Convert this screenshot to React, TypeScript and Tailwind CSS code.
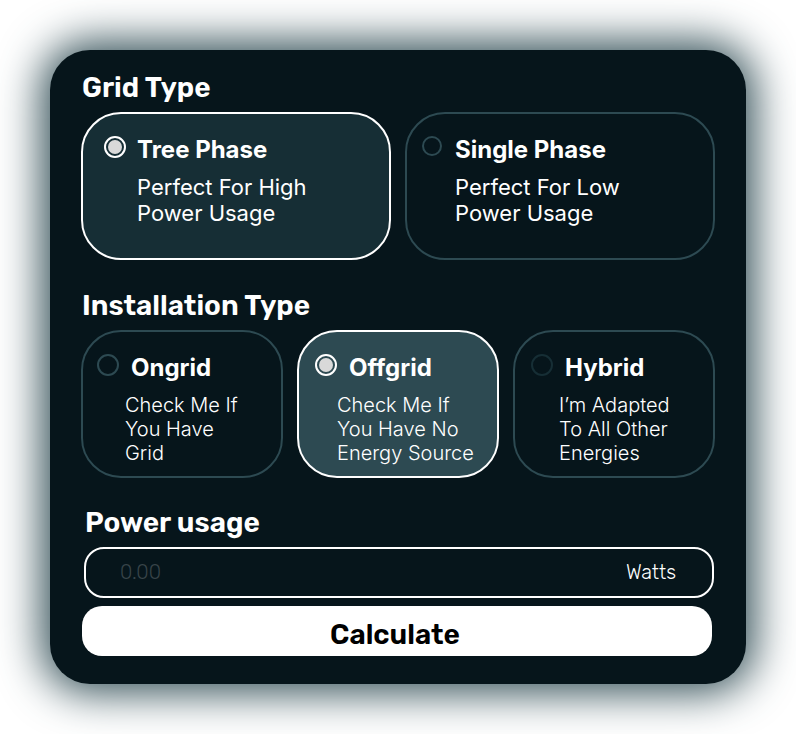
import { useState } from "react";

type Option = {
  id: string;
  title: string;
  lines: string[];
  card: string;
  radio: string;
  text: string;
};

const gridTypes: Option[] = [
  {
    id: "tree",
    title: "Tree Phase",
    lines: ["Perfect For High", "Power Usage"],
    card: "pl-[21px] has-checked:bg-[#162e35]",
    radio: "size-[22px] border-[#2d4a52]",
    text: "pl-[33px]",
  },
  {
    id: "single",
    title: "Single Phase",
    lines: ["Perfect For Low", "Power Usage"],
    card: "pl-[15px] has-checked:bg-[#162e35]",
    radio: "size-5 mr-[2px] border-[#2d4a52]",
    text: "pl-[33px]",
  },
];

const installTypes: Option[] = [
  {
    id: "ongrid",
    title: "Ongrid",
    lines: ["Check Me If", "You Have", "Grid"],
    card: "pl-[14px] has-checked:bg-[#2d4a52]",
    radio: "size-[22px] mr-px border-[#2d4a52]",
    text: "pl-7",
  },
  {
    id: "offgrid",
    title: "Offgrid",
    lines: ["Check Me If", "You Have No", "Energy Source"],
    card: "pl-4 has-checked:bg-[#2d4a52]",
    radio: "size-[22px] mr-px border-[#2d4a52]",
    text: "pl-[22px]",
  },
  {
    id: "hybrid",
    title: "Hybrid",
    lines: ["I’m Adapted", "To All Other", "Energies"],
    card: "pl-4 has-checked:bg-[#2d4a52]",
    radio: "size-[22px] mr-px border-[#162e35]",
    text: "pl-7",
  },
];

function OptionCard({
  option,
  name,
  checked,
  onSelect,
  textStyle,
}: {
  option: Option;
  name: string;
  checked: boolean;
  onSelect: () => void;
  textStyle: string;
}) {
  return (
    <label
      className={`block min-h-[148px] cursor-pointer rounded-[40px] border-2 border-[#2d4a52] pt-[22px] has-checked:border-white ${option.card}`}
    >
      <span className="flex items-start gap-[11px]">
        <input
          type="radio"
          name={name}
          value={option.id}
          checked={checked}
          onChange={onSelect}
          className={`shrink-0 appearance-none rounded-full border-2 p-[2px] checked:border-white checked:bg-[#d9d9d9] checked:bg-clip-content ${option.radio}`}
        />
        <span className="text-2xl/7 font-bold whitespace-nowrap">{option.title}</span>
      </span>
      <span className={`block whitespace-nowrap ${textStyle} ${option.text}`}>
        {option.lines.map((line) => (
          <span key={line} className="block">
            {line}
          </span>
        ))}
      </span>
    </label>
  );
}

const heading = "font-[Rubik,Roboto,sans-serif] text-[28px]/8 font-semibold";

export default function App() {
  const [grid, setGrid] = useState("tree");
  const [install, setInstall] = useState("offgrid");
  const [power, setPower] = useState("");

  return (
    <main className="bg-white p-[50px] font-[Inter,sans-serif] text-white">
      <form
        onSubmit={(event) => event.preventDefault()}
        className="flex flex-col gap-[29px] rounded-[40px] bg-[#06151b] px-[31px] pt-[22px] pb-7 shadow-[0_0_44px_8px_#2d4a52]"
      >
        <section>
          <h2 className={`mb-2 pl-px ${heading}`}>Grid Type</h2>
          <div className="grid grid-cols-2 gap-[14px]">
            {gridTypes.map((option) => (
              <OptionCard
                key={option.id}
                option={option}
                name="grid"
                checked={grid === option.id}
                onSelect={() => setGrid(option.id)}
                textStyle="mt-[10px] text-[22px]/[26px] font-normal"
              />
            ))}
          </div>
        </section>

        <section className="pt-px">
          <h2 className={`mb-2 pl-px ${heading}`}>Installation Type</h2>
          <div className="grid grid-cols-3 gap-[14px]">
            {installTypes.map((option) => (
              <OptionCard
                key={option.id}
                option={option}
                name="install"
                checked={install === option.id}
                onSelect={() => setInstall(option.id)}
                textStyle="mt-[11px] text-xl/6 font-light"
              />
            ))}
          </div>
        </section>

        <section>
          <h2 className={`mb-2 pl-1 ${heading}`}>
            <label htmlFor="power">Power usage</label>
          </h2>
          <div className="mr-px ml-[3px] flex h-[51px] items-center rounded-[20px] border-2 border-white pr-9 pb-[2px] pl-[34px] font-[Rubik,Roboto,sans-serif] text-xl font-light">
            <input
              id="power"
              type="text"
              inputMode="decimal"
              placeholder="0.00"
              value={power}
              onChange={(event) => setPower(event.target.value)}
              className="min-w-0 flex-1 bg-transparent outline-none placeholder:text-[#384449]"
            />
            <span>Watts</span>
          </div>
          <button
            type="submit"
            className={`mt-2 ml-px block h-[50px] w-[calc(100%-4px)] cursor-pointer rounded-[20px] bg-white pt-2 pr-1 text-black ${heading}`}
          >
            Calculate
          </button>
        </section>
      </form>
    </main>
  );
}
